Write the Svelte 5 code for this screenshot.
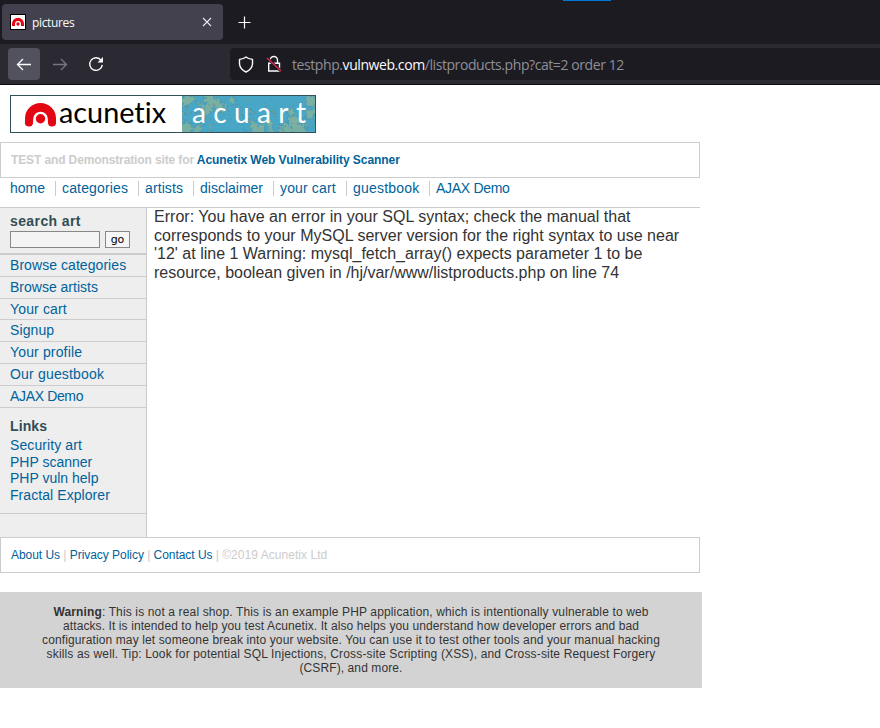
<script>
  const nav = [
    ['home', 10], ['categories', 62], ['artists', 145], ['disclaimer', 200],
    ['your cart', 280], ['guestbook', 353], ['AJAX Demo', 436], ['', 520]
  ];
  const navSpacing = [0, 0.15, 0.1, 0, 0.15, 0.2, -0.3];
  const menu = [
    ['Browse categories', 0.06], ['Browse artists', 0], ['Your cart', 0.15], ['Signup', 0.1],
    ['Your profile', 0.15], ['Our guestbook', 0.18], ['AJAX Demo', -0.35]
  ];
  const links = [['Security art', 0.1], ['PHP scanner', 0], ['PHP vuln help', 0], ['Fractal Explorer', 0.07]];
  const lines = [
    ['Error: You have an error in your SQL syntax; check the manual that', 0.02],
    ['corresponds to your MySQL server version for the right syntax to use near', 0.015],
    ["'12' at line 1 Warning: mysql_fetch_array() expects parameter 1 to be", 0],
    ['resource, boolean given in /hj/var/www/listproducts.php on line 74', 0]
  ];
  const warning = [
    [': This is not a real shop. This is an example PHP application, which is intentionally vulnerable to web', 0.14],
    ['attacks. It is intended to help you test Acunetix. It also helps you understand how developer errors and bad', 0.095],
    ['configuration may let someone break into your website. You can use it to test other tools and your manual hacking', 0.12],
    ['skills as well. Tip: Look for potential SQL Injections, Cross-site Scripting (XSS), and Cross-site Request Forgery', 0.155],
    ['(CSRF), and more.', 0.1]
  ];

  // Fractal coastline texture: soft blobs broken up by layered value noise.
  const blobs = [
    [4, 3, 6], [28, 3, 8], [37, 9, 6], [24, 12, 6], [20, 20, 4], [3, 31, 7], [14, 33, 4],
    [70, 29, 3], [76, 34, 7], [86, 26, 4], [88, 34, 4], [112, 25, 6], [118, 32, 9],
    [104, 35, 7], [129, 4, 6], [128, 18, 5], [50, 3, 3], [109, 16, 3]
  ];
  const hash = (x, y) => {
    let h = Math.imul(x + 91, 374761393) ^ Math.imul(y + 17, 668265263);
    h = Math.imul(h ^ (h >>> 13), 1274126177);
    return ((h ^ (h >>> 16)) >>> 0) / 4294967296;
  };
  const noise = (x, y, s) => {
    const a = Math.floor(x / s), b = Math.floor(y / s);
    const u = x / s - a, v = y / s - b;
    return (hash(a, b) * (1 - u) + hash(a + 1, b) * u) * (1 - v) + (hash(a, b + 1) * (1 - u) + hash(a + 1, b + 1) * u) * v;
  };
  const tones = ['', '', ''];
  for (let y = 0; y < 36; y++) {
    for (let x = 0; x < 133; x++) {
      let e = 0;
      for (const [cx, cy, r] of blobs) e = Math.max(e, 1.35 - Math.hypot(x - cx, y - cy) / (r * 1.15));
      const n = e + (noise(x, y, 4) - 0.5) * 0.9 + (noise(x + 50, y, 1.5) - 0.5) * 1;
      const t = n > 0.75 ? 2 : n > 0.5 ? 1 : n > 0.3 ? 0 : -1;
      if (t >= 0) tones[t] += `M${x} ${y}h1v1h-1z`;
    }
  }
</script>

<div class="browser">
  <div class="tabs">
    <div class="accent"></div>
    <div class="tab">
      <svg class="fav" width="16" height="16" viewBox="0 0 16 16"><rect x=".5" y=".5" width="15" height="15" fill="#fff" stroke="#000"/><path d="M2 9.8A6 6 0 0 1 14 9.8V12h-3V10A3 3 0 0 0 5 10v2H2z" fill="#e30613"/><circle cx="8" cy="10" r="1.7" fill="#e30613"/></svg>
      <span class="title">pictures</span>
      <svg class="close" width="10" height="10" viewBox="0 0 10 10"><path d="M1 1l8 8M9 1L1 9" stroke="#e8e8ee" stroke-width="1.1"/></svg>
    </div>
    <svg class="plus" width="14" height="14" viewBox="0 0 14 14"><path d="M6.5 .5v12M.5 6.5h12" stroke="#fbfbfe" stroke-width="1.2"/></svg>
  </div>
  <div class="bar">
    <div class="btn back"><svg width="16" height="16" viewBox="0 0 16 16" fill="none" stroke="#fbfbfe" stroke-width="1.3"><path d="M15 8.5H2M7 3L1.5 8.5 7 14"/></svg></div>
    <div class="btn"><svg width="16" height="16" viewBox="0 0 16 16" fill="none" stroke="#77767e" stroke-width="1.3"><path d="M1 8.5h13M9 3l5.5 5.5L9 14"/></svg></div>
    <div class="btn reload"><svg width="16" height="16" viewBox="0 0 16 16" fill="none"><path d="M13.2 4.4A6.3 6.3 0 1 0 14.3 8.8" stroke="#fbfbfe" stroke-width="1.4"/><path d="M15 1v5.5H9.5z" fill="#fbfbfe"/></svg></div>
    <div class="url">
      <svg class="shield" width="16" height="17" viewBox="0 0 16 17"><path d="M8 1Q10 2.8 14.5 3.4V8Q14 13.3 8 16 2 13.3 1.5 8V3.4Q6 2.8 8 1z" fill="none" stroke="#fbfbfe" stroke-width="1.4" stroke-linejoin="round"/></svg>
      <svg class="lock" width="16" height="18" viewBox="0 0 16 18" fill="none"><path d="M4.2 8V5.2a3.6 3.6 0 0 1 7.3 0V8M2.7 8.2h10.8V16H2.7z" stroke="#fbfbfe" stroke-width="1.4"/><path d="M1 3l14 13" stroke="#1c1b22" stroke-width="3"/><path d="M1 3l14 13" stroke="#e22850" stroke-width="1.4"/></svg>
      <span class="addr">testphp.<b>vulnweb.com</b>/listproducts.php?cat=2 order 12</span>
    </div>
  </div>
</div>

<main>
  <svg class="logo" width="306" height="38" viewBox="0 0 306 38">
    <rect width="306" height="38" fill="#31505a"/>
    <rect x="1" y="1" width="171" height="36" fill="#fff"/>
    <rect x="172" y="1" width="133" height="36" fill="#48a6c6"/>
    <g transform="translate(172 1)">
      <path d={tones[0]} fill="#4e9ab2"/><path d={tones[1]} fill="#62a5ab"/><path d={tones[2]} fill="#7ab0a2"/>
    </g>
    <path d="M15 23.5A15.5 15.5 0 0 1 46 23.5V27a4 4 0 0 1-8 1L37.8 24A7.3 7.3 0 0 0 23.2 24L23 28a4 4 0 0 1-8-1z" fill="#e30613"/>
    <circle cx="30.5" cy="23.8" r="4.7" fill="#e30613"/>
    <text x="49" y="28" font-size="28" textLength="107" lengthAdjust="spacingAndGlyphs" fill="#000">acunetix</text>
    <text x="182" y="28" font-size="28" textLength="114" fill="#fff">acuart</text>
  </svg>

  <div class="box intro"><span>TEST and Demonstration site for</span> <a>Acunetix Web Vulnerability Scanner</a></div>
  <nav>
    {#each nav.slice(0, -1) as [label, x], i}
      <a class:first={i === 0} style:width="{nav[i + 1][1] - x}px" style:letter-spacing="{navSpacing[i]}px">{label}</a>
    {/each}
  </nav>

  <div class="body">
    <aside>
      <div class="search">
        <h3>search art</h3>
        <div class="form"><span class="input"></span><span class="go">go</span></div>
      </div>
      <ul>
        {#each menu as [m, s]}<li><a style:letter-spacing="{s}px">{m}</a></li>{/each}
      </ul>
      <div class="links">
        <h3>Links</h3>
        {#each links as [l, s]}<a style:letter-spacing="{s}px">{l}</a>{/each}
      </div>
    </aside>
    <section>
      {#each lines as [l, s]}<div style:letter-spacing="{s}px">{l}</div>{/each}
    </section>
  </div>

  <div class="box foot"><a>About Us</a> | <a>Privacy Policy</a> | <a>Contact Us</a> | <span>©2019 Acunetix Ltd</span></div>
  <div class="warn">
    {#each warning as [w, s], i}<div style:letter-spacing="{s}px">{#if i === 0}<b>Warning</b>{/if}{w}</div>{/each}
  </div>
</main>

<style>
  :global(body) { background: #fff; font-family: "Liberation Sans", Arial, sans-serif; }
  .browser { height: 85px; background: #2b2a33; border-bottom: 1px solid #0c0c0d; box-sizing: border-box; font-family: "Open Sans", "Noto Sans", sans-serif; overflow: hidden; }
  .tabs { position: relative; height: 44px; background: #1c1b22; display: flex; align-items: flex-start; box-sizing: border-box; padding: 4px 0 0 2px; }
  .accent { position: absolute; left: 563px; top: 0; width: 48px; height: 1px; background: #0078d7; }
  .tab { width: 221px; height: 36px; background: #42414d; border-radius: 4px; display: flex; align-items: center; box-sizing: border-box; padding: 0 11px 0 8px; }
  .title { color: #fbfbfe; font-size: 12px; letter-spacing: -0.35px; margin: 1px 0 0 6px; flex: 1; }
  .plus { margin: 12px 0 0 15px; }
  .bar { height: 40px; display: flex; align-items: center; padding-left: 8px; }
  .btn { width: 32px; height: 32px; border-radius: 4px; display: flex; align-items: center; justify-content: center; margin-right: 4px; }
  .back { background: #52525e; }
  .url { flex: 1; height: 32px; margin-left: 114px; background: #1c1b22; border-radius: 4px 0 0 4px; display: flex; align-items: center; padding-left: 8px; }
  .lock { margin-left: 12px; }
  .addr { margin: 1px 0 0 10px; color: #8f8f98; font-size: 14px; white-space: nowrap; letter-spacing: -0.42px; }
  .addr b { color: #fbfbfe; font-weight: 400; }
  main { width: 702px; color: #333; }
  .logo { display: block; overflow: visible; margin: 10px 0 9px 10px; font-family: Lato, sans-serif; font-variant-ligatures: none; }
  a { color: #00629b; }
  .box { width: 700px; height: 36px; box-sizing: border-box; border: 1px solid #ccc; padding-left: 10px; line-height: 34px; font-size: 12px; color: #ccc; white-space: nowrap; }
  .intro { font-weight: 700; letter-spacing: -0.05px; }
  .intro span { letter-spacing: -0.12px; }
  .foot { letter-spacing: -0.04px; }
  .foot span { letter-spacing: 0.05px; }
  nav { display: flex; width: 690px; height: 29px; padding-left: 10px; border-bottom: 1px solid #ccc; font-size: 14px; line-height: 20px; white-space: nowrap; }
  nav a { position: relative; }
  nav a:not(.first)::before { content: ""; position: absolute; left: -7px; top: 3px; width: 1px; height: 15px; background: #ccc; }
  .body { display: flex; width: 700px; height: 329px; }
  aside { width: 146px; background: #eee; border-right: 1px solid #ccc; font-size: 14px; }
  h3 { margin: 0; font-size: 14px; line-height: 16px; color: #334d55; letter-spacing: 0.1px; }
  .search { height: 45px; box-sizing: border-box; padding: 5px 0 0 10px; }
  .search h3 { letter-spacing: 0.4px; }
  .form { display: flex; align-items: center; gap: 5px; margin-top: 2px; }
  .input { width: 90px; height: 17px; box-sizing: border-box; border: 1px solid #888; background: #f4f4f4; }
  .go { width: 25px; height: 17px; box-sizing: border-box; border: 1px solid #888; background: #f6f6f6; color: #000; font: 11px/16px "DejaVu Sans", sans-serif; text-align: center; }
  ul { list-style: none; margin: 0; padding: 0; border-top: 1px solid #ccc; }
  li { height: 21.83px; box-sizing: border-box; padding-left: 10px; border-top: 1px solid #ccc; line-height: 20.8px; }
  .links { height: 107px; box-sizing: border-box; padding: 10px 0 0 10px; border-top: 1px solid #ccc; border-bottom: 1px solid #ccc; }
  .links h3 { margin-bottom: 3px; }
  .links a { display: block; line-height: 16.7px; }
  section { padding-left: 7px; font-size: 16px; line-height: 18.6px; white-space: nowrap; }
  .warn { width: 702px; height: 96px; box-sizing: border-box; margin-top: 19px; padding-top: 13px; background: #d3d3d3; text-align: center; font-size: 12px; line-height: 14px; white-space: nowrap; }
</style>
